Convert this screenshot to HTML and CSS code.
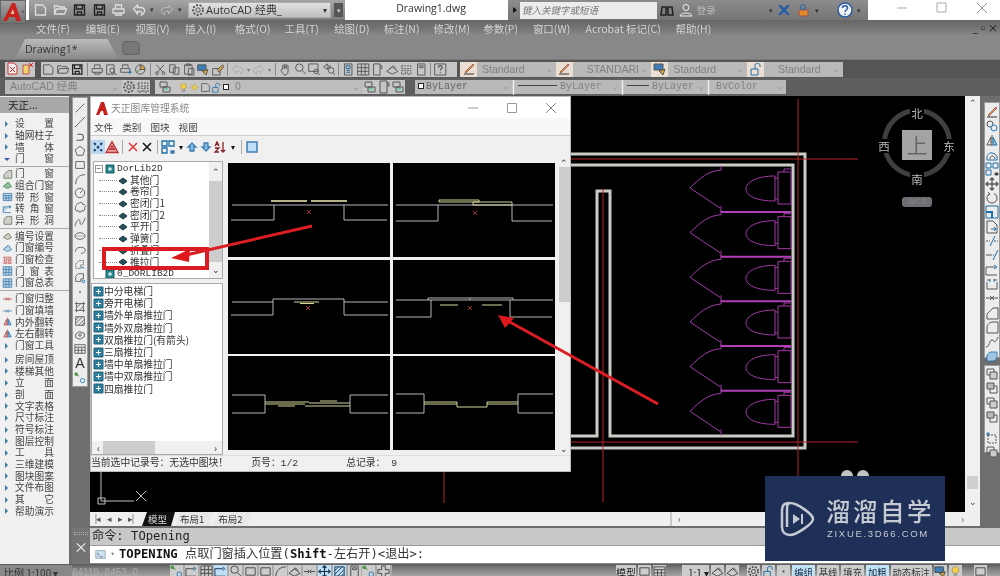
FILE: index.html
```html
<!DOCTYPE html>
<html lang="zh">
<head>
<meta charset="utf-8">
<title>AutoCAD</title>
<link rel="stylesheet" href="styles.css">
</head>
<body>
<svg class="sprite" width="0" height="0" aria-hidden="true">
<defs>
<symbol id="doc" viewBox="0 0 14 14"><path d="M2 2h7l3 3v7H2z"/></symbol>
<symbol id="open" viewBox="0 0 14 14"><path d="M1 11V3h4l1 1h5v2M1 11l2-5h10l-2 5z"/></symbol>
<symbol id="save" viewBox="0 0 14 14"><path d="M2 2h10v10H2zM4 2v4h6V2M5 9h4v3H5z" stroke-width="1.400"/></symbol>
<symbol id="print" viewBox="0 0 14 14"><path d="M4 5V2h6v3M1.500 6h11v4h-11zM4 10v2h6v-2"/></symbol>
<symbol id="prev" viewBox="0 0 14 14"><path d="M2 2h8v10H2z"/><circle cx="8" cy="8" r="2.500"/><path d="M10 10l3 3"/></symbol>
<symbol id="pub" viewBox="0 0 14 14"><path d="M3 5V2h6v3M1 6h10v4H1z"/><path d="M9 10h4M11 8v4" stroke="#1c6fa8"/></symbol>
<symbol id="pie" viewBox="0 0 14 14"><circle cx="7" cy="7" r="5"/><path d="M7 7V2a5 5 0 0 1 5 5z" fill="#d6a23a"/><path d="M7 7l-4 3" stroke="#3a8a3a"/></symbol>
<symbol id="cut" viewBox="0 0 14 14"><path d="M3 2l7 8M11 2l-7 8"/><circle cx="3.500" cy="11" r="1.500"/><circle cx="10.500" cy="11" r="1.500"/></symbol>
<symbol id="copy" viewBox="0 0 14 14"><path d="M2 2h6v8H2zM6 5h6v7H6z"/></symbol>
<symbol id="paste" viewBox="0 0 14 14"><path d="M2 2h8v10H2zM4 1h4v2H4zM6 6h6v7H6z"/></symbol>
<symbol id="match" viewBox="0 0 14 14"><path d="M1 2h9v6H1z" fill="#3f7fb5"/><path d="M6 9l6-2-2 6z" fill="#d9a33c"/></symbol>
<symbol id="brush" viewBox="0 0 14 14"><path d="M1 6h8v7H1z"/><path d="M6 7l6-5 1 2-5 6z" fill="#d9a33c"/></symbol>
<symbol id="undo" viewBox="0 0 14 14"><path d="M2 6l4-4v2.500h3c3 0 4 2 4 3.500s-1 3-3 4c1-2 0-3.500-2-3.500H6V11z"/></symbol>
<symbol id="redo" viewBox="0 0 14 14"><path d="M12 6L8 2v2.500H5C2 4.500 1 6.500 1 8s1 3 3 4c-1-2 0-3.500 2-3.500h2V11z"/></symbol>
<symbol id="pan" viewBox="0 0 14 14"><path d="M4 7V3l1-1 1 1v3-4l1-1 1 1v4-3l1-1 1 1v7l-2 3H6L2 8l1-1z"/></symbol>
<symbol id="zoom" viewBox="0 0 14 14"><circle cx="6" cy="5" r="4"/><path d="M9 8l4 4"/></symbol>
<symbol id="zwin" viewBox="0 0 14 14"><path d="M1 1h10v8H1z"/><circle cx="9" cy="9" r="2.500"/><path d="M11 11l2 2"/></symbol>
<symbol id="zprev" viewBox="0 0 14 14"><circle cx="9" cy="8" r="3"/><path d="M11 10l2 3M1 4l4-3v2h3v2H5v2z"/></symbol>
<symbol id="props" viewBox="0 0 14 14"><path d="M3 1h8v12H3z"/><path d="M5 3h4v3H5zM5 8h4M5 10h4" stroke="#1c5f90"/></symbol>
<symbol id="grid" viewBox="0 0 14 14"><path d="M1 1h12v12H1zM1 5h12M1 9h12M5 1v12M9 1v12"/></symbol>
<symbol id="tool" viewBox="0 0 14 14"><path d="M3 1h7v12H3zM10 3h2v3h-2"/></symbol>
<symbol id="sheet" viewBox="0 0 14 14"><path d="M1 9l6-5 6 5-6 3z"/><path d="M4 7l4-4 3 3"/></symbol>
<symbol id="markup" viewBox="0 0 14 14"><path d="M2 3h10v3H2zM2 8h4v4H2zM8 8h4v4H8z" stroke-dasharray="2 1"/></symbol>
<symbol id="calc" viewBox="0 0 14 14"><path d="M3 1h8v12H3zM5 3h4v2H5z"/></symbol>
<symbol id="help" viewBox="0 0 14 14"><path d="M1 1h12v12H1z"/><path d="M5 5c0-3 4-3 4 0 0 1.500-2 1.500-2 3M7 10v1" stroke-width="1.300"/></symbol>
<symbol id="red1" viewBox="0 0 14 14"><path d="M2 1h6l3 3v8H2z" fill="#eee" stroke="#c33"/><path d="M4 5l5 5M9 5l-5 5" stroke="#c22"/></symbol>
<symbol id="red2" viewBox="0 0 14 14"><path d="M2 3h6v9H2z" fill="#f3d26a" stroke="#b55"/><path d="M8 1l4 4M12 1L8 5" stroke="#d22"/></symbol>
<symbol id="gear" viewBox="0 0 14 14"><circle cx="7" cy="7" r="2.200"/><circle cx="7" cy="7" r="5" stroke-dasharray="2 1.500" stroke-width="1.800"/></symbol>
<symbol id="layer" viewBox="0 0 14 14"><path d="M2 2h7v5H2zM5 7h7v5H5z"/><path d="M6 9h4" stroke="#2c7"/></symbol>
<symbol id="bulb" viewBox="0 0 14 14"><circle cx="7" cy="5.500" r="3.800" fill="#f0d040" stroke="#a98"/><path d="M5.500 10h3v2h-3z" stroke="#888"/></symbol>
<symbol id="sun" viewBox="0 0 14 14"><circle cx="7" cy="7" r="3" fill="#eed040" stroke="#ba8"/><path d="M7 1v2M7 11v2M1 7h2M11 7h2M3 3l1 1M10 10l1 1M11 3l-1 1M4 10l-1 1" stroke="#ca6"/></symbol>
<symbol id="lock" viewBox="0 0 14 14"><path d="M2 7h7v6H2z" stroke="#1c6fa8"/><path d="M6 7V3c0-2 5-2 5 0v2" stroke="#1c6fa8"/></symbol>
<symbol id="line" viewBox="0 0 14 14"><path d="M2 12L12 2"/></symbol>
<symbol id="xline" viewBox="0 0 14 14"><path d="M1 13L13 1M3 11l1 1M10 4l1-1"/></symbol>
<symbol id="pline" viewBox="0 0 14 14"><path d="M3 12h5c4 0 4-7 0-7H4" stroke-width="1.200"/></symbol>
<symbol id="polygon" viewBox="0 0 14 14"><path d="M7 1.500l5.500 4-2 6.500h-7l-2-6.500z"/></symbol>
<symbol id="rect" viewBox="0 0 14 14"><path d="M2 3h10v8H2z"/></symbol>
<symbol id="arc" viewBox="0 0 14 14"><path d="M2 13C2 6 6 2 13 2"/></symbol>
<symbol id="circle" viewBox="0 0 14 14"><circle cx="7" cy="7" r="5.500"/><path d="M7 7l3-3"/></symbol>
<symbol id="cloud" viewBox="0 0 14 14"><path d="M3 5a2 2 0 0 1 3-2 2 2 0 0 1 4 1 2 2 0 0 1 2 4 2 2 0 0 1-3 3 2 2 0 0 1-4 0 2 2 0 0 1-3-3 2 2 0 0 1 1-3z"/></symbol>
<symbol id="spline" viewBox="0 0 14 14"><path d="M1 12C4 2 7 3 7 7s3 5 6-5"/></symbol>
<symbol id="ellipse" viewBox="0 0 14 14"><ellipse cx="7" cy="7" rx="6" ry="3.800"/><path d="M2 7h10" stroke-width=".5"/></symbol>
<symbol id="earc" viewBox="0 0 14 14"><path d="M2 9C0 4 11 2 13 6c1 3-2 5-5 5"/></symbol>
<symbol id="ins" viewBox="0 0 14 14"><path d="M2 7l4-4h5v5H8v4H2z" stroke-dasharray="2 1"/><path d="M8 10l4 2" stroke="#1c6fa8"/></symbol>
<symbol id="blk" viewBox="0 0 14 14"><path d="M2 5l3-3h6v6H8v3H2z"/><circle cx="11" cy="11" r="1.500" stroke="#1c6fa8"/></symbol>
<symbol id="dot" viewBox="0 0 14 14"><path d="M6 7h2" stroke-width="2"/></symbol>
<symbol id="hatch" viewBox="0 0 14 14"><path d="M3 3h8v8H3zM1 3h2M11 3h2M1 11h2M11 11h2M3 1v2M11 1v2M3 11v2M11 11v2M3 8l5-5M6 11l5-5"/></symbol>
<symbol id="grad" viewBox="0 0 14 14"><path d="M2 2h10v10H2zM2 6l4-4M2 10l8-8M5 12l7-7M9 12l3-3"/></symbol>
<symbol id="region" viewBox="0 0 14 14"><path d="M2 6l4-3 6 2v4l-5 3-5-2z"/><circle cx="7" cy="7" r="1.500"/></symbol>
<symbol id="tbl" viewBox="0 0 14 14"><path d="M1 2h12v10H1zM1 5h12M1 8.500h12M5 5v7M9 5v7"/></symbol>
<symbol id="addsel" viewBox="0 0 14 14"><path d="M2 2l4 3" stroke="#3a8a3a"/><circle cx="2.500" cy="2.500" r="1.500" fill="#5a5" stroke="#3a8a3a"/><circle cx="10" cy="10" r="2.500" stroke="#1c7fc0"/></symbol>
<symbol id="erase" viewBox="0 0 14 14"><path d="M2 12h10" stroke="#333"/><path d="M3 10L11 2l1 1-8 8z" fill="#d9a33c" stroke="#a66"/></symbol>
<symbol id="rcopy" viewBox="0 0 14 14"><circle cx="5" cy="5" r="3"/><circle cx="9" cy="9" r="3" stroke="#1c7fc0"/></symbol>
<symbol id="mirror" viewBox="0 0 14 14"><path d="M7 1v12" stroke-dasharray="2 1"/><path d="M6 3v8H2z"/><path d="M8 3v8h4z" fill="#9fc5e0" stroke="#1c6fa8"/></symbol>
<symbol id="offset" viewBox="0 0 14 14"><path d="M2 12c-1-4 2-8 5-7s6 2 5 7z" stroke="#1c6fa8"/><path d="M5 11c0-2 1-3 2-3s3 1 3 3" /></symbol>
<symbol id="array" viewBox="0 0 14 14"><path d="M1 1h5v5H1zM8 1h5v5H8zM1 8h5v5H1z" stroke="#1c6fa8"/><path d="M10 11h3v2h-3z" fill="#333"/></symbol>
<symbol id="move" viewBox="0 0 14 14"><path d="M7 1v12M1 7h12M5 3l2-2 2 2M5 11l2 2 2-2M3 5L1 7l2 2M11 5l2 2-2 2" stroke-width="1.300"/></symbol>
<symbol id="rot" viewBox="0 0 14 14"><path d="M9 2.500a5 5 0 1 1-4 0M3 1l2 2-2 1"/></symbol>
<symbol id="scale" viewBox="0 0 14 14"><path d="M1 1h12v12H1z" stroke="#1c6fa8"/><path d="M1 7h6v6" stroke="#1c6fa8" stroke-width="2"/></symbol>
<symbol id="stretch" viewBox="0 0 14 14"><path d="M2 13V1h6l4 4v8z"/><path d="M6 9h5M9 7l2 2-2 2" stroke="#1c6fa8"/></symbol>
<symbol id="trim" viewBox="0 0 14 14"><path d="M1 7h4M9 7h4" stroke-dasharray="2 1"/><path d="M5 12l5-10" stroke="#1c6fa8"/></symbol>
<symbol id="extend" viewBox="0 0 14 14"><path d="M1 7h5" /><path d="M6 7h3" stroke-dasharray="1 1"/><path d="M8 12l5-10" stroke="#1c6fa8"/></symbol>
<symbol id="brk1" viewBox="0 0 14 14"><path d="M1 12V4h9M1 12h11" /><path d="M9 2l3 2-3 2" stroke="#1c6fa8"/></symbol>
<symbol id="brk2" viewBox="0 0 14 14"><path d="M2 5v7h10V5M2 3h3M9 3h3" /><path d="M5 2v3M9 2v3" stroke="#1c6fa8"/></symbol>
<symbol id="join" viewBox="0 0 14 14"><path d="M1 7h5M8 7h5M5 5l2 2-2 2M9 5L7 7l2 2"/></symbol>
<symbol id="chamfer" viewBox="0 0 14 14"><path d="M2 13V8l6-6h5v11z"/></symbol>
<symbol id="fillet" viewBox="0 0 14 14"><path d="M2 13V8c0-4 3-6 6-6h5v11z"/></symbol>
<symbol id="blend" viewBox="0 0 14 14"><path d="M1 12c4 0 3-7 6-7s2 6 6-3"/></symbol>
<symbol id="expl" viewBox="0 0 14 14"><path d="M2 6l3-3h7v6l-3 3H2z" fill="#9fc5e0" stroke="#1c6fa8" stroke-dasharray="2 .5"/></symbol>
<symbol id="front" viewBox="0 0 14 14"><path d="M2 2h7v6H2z"/><path d="M5 5h7v7H5z" fill="#ccc"/></symbol>
<symbol id="back" viewBox="0 0 14 14"><path d="M5 5h7v7H5z"/><path d="M2 2h7v6H2z" fill="#bbb"/></symbol>
<symbol id="tbadd" viewBox="0 0 14 14"><path d="M3 4h8v8H3z" stroke-dasharray="2 1"/><path d="M1 3h4M3 1v4" stroke="#1c6fa8"/></symbol>
<symbol id="plus" viewBox="0 0 14 14"><path d="M5 1h4v4h4v4H9v4H5V9H1V5h4z"/></symbol>
<symbol id="slider" viewBox="0 0 10 10"><path d="M1 1h8v8H1z" fill="#2a8a8a" stroke="#156"/><path d="M3 5h4M5 3v4" stroke="#fff"/></symbol>
<symbol id="blockic" viewBox="0 0 10 10"><path d="M1 5l4-3 4 3-4 3z" fill="#26505a" stroke="#16383f"/></symbol>
<symbol id="listic" viewBox="0 0 11 11"><path d="M1 1h9v9H1z" fill="#2f7f9c" stroke="#20607a"/><path d="M3 5.500h5M5.500 3v5" stroke="#fff"/></symbol>
</defs>
</svg>

<div class="app">
  <header class="titlebar">
    <div class="appbtn"><svg width="26" height="22" viewBox="0 0 26 22"><path d="M3 20L12 2h3l6 18h-5l-1-4H9l-2 4z" fill="#c8201c"/><path d="M10.500 13h4l-1.500-5z" fill="#e7b9a8"/><path d="M22 10l2 0-1 2z" fill="#333"/></svg></div>
    <div class="quick">
      <svg class="ic lite"><use href="#doc"/></svg><svg class="ic lite"><use href="#open"/></svg><svg class="ic dk"><use href="#save"/></svg><svg class="ic dk"><use href="#save"/></svg><svg class="ic lite"><use href="#print"/></svg><svg class="ic lite"><use href="#undo"/></svg><span class="drop">▾</span><svg class="ic fade"><use href="#redo"/></svg><span class="drop">▾</span>
      <div class="wscombo"><svg class="ic"><use href="#gear"/></svg><span>AutoCAD 经典_</span><span class="caret">▾</span></div>
      <span class="more">▾</span>
    </div>
    <div class="doctitle">Drawing1.dwg</div>
    <div class="search">
      <span class="tri"></span>
      <div class="searchbox">键入关键字或短语</div>
      <svg class="ic big" viewBox="0 0 14 14"><path d="M2 4h4v8H1zM8 4h4l1 8H8zM6 6h2" stroke="#222" stroke-width="1.500"/></svg>
      <svg class="ic big" viewBox="0 0 14 14"><circle cx="7" cy="4.500" r="3" stroke="#eee"/><path d="M1 13c1-4 11-4 12 0z" stroke="#eee"/></svg>
      <span class="login">登录</span>
      <span class="drop wide">▾</span>
      <svg class="ic big" viewBox="0 0 14 14"><path d="M1 2l4 5-4 5h3l3-3 3 3h3L9 7l4-5h-3L7 5 4 2z" fill="#2b5fa5" stroke="none"/></svg>
      <svg class="ic big" viewBox="0 0 14 14"><path d="M3 7h9v6H3z" fill="#e48a2a" stroke="#955"/><circle cx="7" cy="4" r="2.500" stroke="#26a"/></svg>
      <span class="drop">▾</span>
      <svg class="ic help" viewBox="0 0 16 16"><circle cx="8" cy="8" r="7" fill="#f3f3f3" stroke="#2a5ea8" stroke-width="1.500"/><path d="M5.500 6c0-3 5-3 5 0 0 2-2.500 2-2.500 4M8 11.500v1.500" stroke="#2a5ea8" stroke-width="1.500"/></svg>
      <span class="drop">▾</span>
    </div>
    <div class="winctl">
      <svg width="14" height="14" viewBox="0 0 14 14"><path d="M2 7h10" stroke="#aaa"/></svg>
      <svg width="14" height="14" viewBox="0 0 14 14"><path d="M2 2h9v9H2z" fill="none" stroke="#aaa"/></svg>
      <svg width="14" height="14" viewBox="0 0 14 14"><path d="M2 2l10 10M12 2L2 12" stroke="#999"/></svg>
    </div>
  </header>

  <nav class="menubar">
    <span class="m2">文件(F)</span><span class="m2">编辑(E)</span><span class="m2">视图(V)</span><span class="m2">插入(I)</span><span class="m2">格式(O)</span><span class="m2">工具(T)</span><span class="m2">绘图(D)</span><span class="m2">标注(N)</span><span class="m2">修改(M)</span><span class="m2">参数(P)</span><span class="m2">窗口(W)</span><span class="m3">Acrobat 标记(C)</span><span class="m4">帮助(H)</span>
    <span class="mdi"><b>_</b><b>▫</b><b>×</b></span>
  </nav>

  <div class="tabbar">
    <div class="doctab"><span>Drawing1*</span><i>×</i></div>
    <div class="newtab"></div>
  </div>

  <div class="tbrow r1">
    <div class="panel p-a"><svg class="ic"><use href="#red1"/></svg><svg class="ic"><use href="#red2"/></svg></div>
    <div class="panel p-b">
      <svg class="ic"><use href="#doc"/></svg><svg class="ic"><use href="#open"/></svg><svg class="ic dk"><use href="#save"/></svg><i class="sep"></i>
      <svg class="ic"><use href="#print"/></svg><svg class="ic"><use href="#prev"/></svg><svg class="ic"><use href="#pub"/></svg><svg class="ic"><use href="#pie"/></svg><i class="sep"></i>
      <svg class="ic"><use href="#cut"/></svg><svg class="ic"><use href="#copy"/></svg><svg class="ic"><use href="#paste"/></svg><svg class="ic"><use href="#match"/></svg><svg class="ic"><use href="#brush"/></svg><i class="sep"></i>
      <svg class="ic fade"><use href="#undo"/></svg><span class="tiny">▾</span><svg class="ic fade"><use href="#redo"/></svg><span class="tiny">▾</span><i class="sep"></i>
      <svg class="ic"><use href="#pan"/></svg><svg class="ic"><use href="#zoom"/></svg><svg class="ic"><use href="#zwin"/></svg><svg class="ic"><use href="#zprev"/></svg><i class="sep"></i>
      <svg class="ic"><use href="#props"/></svg><svg class="ic"><use href="#grid"/></svg><svg class="ic"><use href="#tool"/></svg><svg class="ic"><use href="#sheet"/></svg><svg class="ic"><use href="#markup"/></svg><svg class="ic"><use href="#calc"/></svg><i class="sep"></i>
      <svg class="ic"><use href="#help"/></svg>
    </div>
    <div class="panel p-c">
      <div class="icbox"><svg class="ic"><use href="#erase"/></svg></div><div class="combo w78 sans">Standard<span class="chev">⌄</span></div>
      <div class="icbox"><svg class="ic"><use href="#erase"/></svg></div><div class="combo w78 sans ctr">STANDARI<span class="chev">⌄</span></div>
      <div class="icbox"><svg class="ic"><use href="#match"/></svg></div><div class="combo w78 sans">Standard<span class="chev">⌄</span></div>
      <div class="icbox"><svg class="ic"><use href="#lock"/></svg></div><div class="combo w78 sans ctr">Standard<span class="chev">⌄</span></div>
    </div>
  </div>

  <div class="tbrow r2">
    <div class="panel q-a"><div class="combo flex1 sans">AutoCAD 经典<span class="chev">⌄</span></div><svg class="ic"><use href="#gear"/></svg><svg class="ic"><use href="#markup"/></svg></div>
    <div class="panel q-b"><svg class="ic"><use href="#layer"/></svg><i class="gapx"></i><svg class="ic sm"><use href="#bulb"/></svg><svg class="ic sm"><use href="#sun"/></svg><svg class="ic sm"><use href="#doc"/></svg><svg class="ic sm"><use href="#lock"/></svg><span class="sw"></span><div class="combo flex1 sans layer0">0<span class="chev">⌄</span></div><svg class="ic"><use href="#layer"/></svg><svg class="ic"><use href="#tool"/></svg><svg class="ic"><use href="#layer"/></svg></div>
    <div class="panel q-c">
      <div class="combo by1 mono"><span class="sw2"></span>ByLayer<span class="chev">⌄</span></div><i class="sep tall"></i>
      <div class="combo by2 mono"><span class="ln l58"></span>ByLayer<span class="chev">⌄</span></div><i class="sep tall"></i>
      <div class="combo by3 mono"><span class="ln l22"></span>ByLayer<span class="chev">⌄</span></div><i class="sep tall"></i>
      <div class="combo by4 mono">BvColor<span class="chev">⌄</span></div>
    </div>
  </div>

  <div class="body">
    <aside class="palette">
      <div class="phead">天正...</div>
      <ul class="plist">
        <li><em class="tr"></em><span>设置</span></li>
        <li><em class="tr"></em><span>轴网柱子</span></li>
        <li><em class="tr"></em><span>墙体</span></li>
        <li><em class="tr down"></em><span>门窗</span></li>
        <li class="psep s2"></li>
        <li><svg class="pic"><use href="#chamfer"/></svg><span>门窗</span></li>
        <li><svg class="pic g"><use href="#sheet"/></svg><span>组合门窗</span></li>
        <li><svg class="pic b"><use href="#tbl"/></svg><span>带形窗</span></li>
        <li><svg class="pic b"><use href="#brk1"/></svg><span>转角窗</span></li>
        <li><svg class="pic"><use href="#fillet"/></svg><span>异形洞</span></li>
        <li class="psep s3"></li>
        <li><svg class="pic"><use href="#sheet"/></svg><span>编号设置</span></li>
        <li><svg class="pic b"><use href="#sheet"/></svg><span>门窗编号</span></li>
        <li><svg class="pic r"><use href="#markup"/></svg><span>门窗检查</span></li>
        <li><svg class="pic b"><use href="#grid"/></svg><span>门窗表</span></li>
        <li><svg class="pic b"><use href="#grid"/></svg><span>门窗总表</span></li>
        <li class="psep s3"></li>
        <li><svg class="pic r"><use href="#join"/></svg><span>门窗归整</span></li>
        <li><svg class="pic b"><use href="#join"/></svg><span>门窗填墙</span></li>
        <li><svg class="pic r"><use href="#mirror"/></svg><span>内外翻转</span></li>
        <li><svg class="pic r"><use href="#mirror"/></svg><span>左右翻转</span></li>
        <li><em class="tr"></em><span>门窗工具</span></li>
        <li class="pgap"></li>
        <li><em class="tr"></em><span>房间屋顶</span></li>
        <li><em class="tr"></em><span>楼梯其他</span></li>
        <li><em class="tr"></em><span>立面</span></li>
        <li><em class="tr"></em><span>剖面</span></li>
        <li><em class="tr"></em><span>文字表格</span></li>
        <li><em class="tr"></em><span>尺寸标注</span></li>
        <li><em class="tr"></em><span>符号标注</span></li>
        <li><em class="tr"></em><span>图层控制</span></li>
        <li><em class="tr"></em><span>工具</span></li>
        <li><em class="tr"></em><span>三维建模</span></li>
        <li><em class="tr"></em><span>图块图案</span></li>
        <li><em class="tr"></em><span>文件布图</span></li>
        <li><em class="tr"></em><span>其它</span></li>
        <li><em class="tr"></em><span>帮助演示</span></li>
      </ul>
    </aside>
    <div class="main">
      <div class="work">
        <div class="leftstrip">
          <svg class="ti"><use href="#line"/></svg><svg class="ti"><use href="#xline"/></svg><svg class="ti"><use href="#pline"/></svg><svg class="ti"><use href="#polygon"/></svg><svg class="ti"><use href="#rect"/></svg><svg class="ti"><use href="#arc"/></svg><svg class="ti"><use href="#circle"/></svg><svg class="ti"><use href="#cloud"/></svg><svg class="ti"><use href="#spline"/></svg><svg class="ti"><use href="#ellipse"/></svg><svg class="ti"><use href="#earc"/></svg><svg class="ti"><use href="#ins"/></svg><svg class="ti"><use href="#blk"/></svg><svg class="ti"><use href="#dot"/></svg><svg class="ti"><use href="#hatch"/></svg><svg class="ti"><use href="#grad"/></svg><svg class="ti"><use href="#region"/></svg><svg class="ti"><use href="#tbl"/></svg><span class="ti txt">A</span><svg class="ti"><use href="#addsel"/></svg>
        </div>
        <div class="center">
          <div class="vp-row">
            <div class="viewport">
              <svg class="cad" viewBox="90 96 875 416" width="875" height="416">
                <defs>
                  <g id="stall">
                    <path d="M721 166V170C708 171 700 178 690 188L720 208M721 206V212"/>
                    <path d="M775 176C757 176 746 182 746 189S757 201 775 201ZM775 178H778M775 199H778M778 172H791V204H778ZM784 172V169H791"/>
                  </g>
                </defs>
                <g class="walls">
                  <path d="M571 154H805V448H571"/>
                  <path d="M571 165H793V436H610V191H597V436H571"/>
                </g>
                <g class="axis">
                  <path d="M571 159H858M571 442H858M798 99V512M603 189V502M444 470V503"/>
                </g>
                <g class="stalls">
                  <use href="#stall"/>
                  <use href="#stall" y="44.670"/>
                  <use href="#stall" y="89.330"/>
                  <use href="#stall" y="134"/>
                  <use href="#stall" y="178.670"/>
                  <use href="#stall" y="223.330"/>
                  <path class="part" d="M721 212H791M721 256.700H791M721 301.300H791M721 346H791M721 390.700H791"/>
                </g>
                <g class="ucs"><path d="M101 470V501H134M98 498h7v6h-7zM136 491l10 10M146 491l-10 10"/></g>
                <circle class="avatar" cx="847" cy="476" r="6"/><circle class="avatar" cx="863" cy="476" r="6"/>
              </svg>
              <div class="viewcube">
                <span class="vc-ring"></span>
                <span class="vc-top">上</span>
                <span class="vc-n">北</span><span class="vc-s">南</span><span class="vc-w">西</span><span class="vc-e">东</span>
                <span class="vc-wcs">WCS</span>
              </div>
            </div>
            <div class="vscroll"><span>⌃</span><i></i><span>⌄</span></div>
          </div>
          <div class="layouttabs">
            <span class="navs"><b>|◂</b><b>◂</b><b>▸</b><b>▸|</b></span>
            <span class="ltab active">模型</span><span class="ltab">布局1</span><span class="ltab">布局2</span>
            <span class="hsc"><b>‹</b><b>›</b></span>
          </div>
        </div>
        <div class="rightside">
          <div class="rstrip">
            <svg class="ti"><use href="#erase"/></svg><svg class="ti"><use href="#rcopy"/></svg><svg class="ti"><use href="#mirror"/></svg><svg class="ti"><use href="#offset"/></svg><svg class="ti"><use href="#array"/></svg><svg class="ti"><use href="#move"/></svg><svg class="ti"><use href="#rot"/></svg><svg class="ti"><use href="#scale"/></svg><svg class="ti"><use href="#stretch"/></svg><svg class="ti"><use href="#trim"/></svg><svg class="ti"><use href="#extend"/></svg><svg class="ti"><use href="#brk1"/></svg><svg class="ti"><use href="#brk2"/></svg><svg class="ti"><use href="#join"/></svg><svg class="ti"><use href="#chamfer"/></svg><svg class="ti"><use href="#fillet"/></svg><svg class="ti"><use href="#blend"/></svg><svg class="ti"><use href="#expl"/></svg>
          </div>
          <div class="rstrip two">
            <svg class="ti"><use href="#front"/></svg><svg class="ti"><use href="#back"/></svg><svg class="ti"><use href="#front"/></svg><svg class="ti"><use href="#back"/></svg><i class="rsep"></i><svg class="ti"><use href="#tbadd"/></svg><svg class="ti"><use href="#front"/></svg>
          </div>
        </div>
      </div>
      <div class="command">
        <div class="cmdhandle"><span class="dots"></span><span class="cx">×</span></div>
        <div class="cmdtext">
          <div class="cmdhist">命令: TOpening</div>
          <div class="cmdline"><svg class="ic sm" viewBox="0 0 14 14"><path d="M1 2h12v10H1z" fill="#cfe0ee" stroke="#8aa"/><path d="M3 5l2 2-2 2M6 10h4" stroke="#456"/></svg><span class="tiny">▾</span><span class="cmdmsg"><b>TOPENING</b> 点取门窗插入位置(<b>Shift</b>-左右开)&lt;退出&gt;:</span></div>
        </div>
      </div>
    </div>
  </div>

  <footer class="status">
    <span class="scale">比例 1:100 ▾</span>
    <span class="coords">84119, 8453, 0</span>
    <span class="stoggles">
      <svg class="si"><use href="#addsel"/></svg><svg class="si"><use href="#brk1"/></svg><svg class="si"><use href="#grid"/></svg><svg class="si on"><use href="#brk1"/></svg><svg class="si"><use href="#zoom"/></svg><svg class="si"><use href="#rect"/></svg><svg class="si"><use href="#rect"/></svg><svg class="si"><use href="#arc"/></svg><svg class="si"><use href="#sheet"/></svg><svg class="si"><use href="#join"/></svg><svg class="si on"><use href="#move"/></svg><svg class="si on"><use href="#grad"/></svg><svg class="si"><use href="#calc"/></svg><svg class="si"><use href="#addsel"/></svg><svg class="si"><use href="#plus"/></svg>
    </span>
    <span class="sright">
      <span class="st1">模型</span><svg class="si"><use href="#rect"/></svg><svg class="si"><use href="#tbl"/></svg>
      <span class="st2">1:1 ▾</span><svg class="si"><use href="#sheet"/></svg><svg class="si"><use href="#sheet"/></svg><i class="gap4"></i><svg class="si"><use href="#gear"/></svg><svg class="si"><use href="#lock"/></svg><svg class="si"><use href="#dot"/></svg>
      <span class="chip on">编组</span><span class="chip">基线</span><span class="chip">填充</span><span class="chip on">加粗</span><span class="chip">动态标注</span><svg class="si"><use href="#match"/></svg><svg class="si"><use href="#bulb"/></svg><i class="gap8"></i><svg class="si"><use href="#rect"/></svg>
    </span>
  </footer>

  <section class="dialog">
    <div class="dtitle"><svg width="14" height="14" viewBox="0 0 14 14"><path d="M1 14L6 1h3l4 13H9L8 10H6l-2 4z" fill="#c8201c"/></svg><span>天正图库管理系统</span>
      <div class="dctl"><svg width="12" height="12" viewBox="0 0 12 12"><path d="M1 6h10" stroke="#999"/></svg><svg width="12" height="12" viewBox="0 0 12 12"><path d="M1.500 1.500h9v9h-9z" fill="none" stroke="#999"/></svg><svg width="12" height="12" viewBox="0 0 12 12"><path d="M1 1l10 10M11 1L1 11" stroke="#888"/></svg></div>
    </div>
    <div class="dmenu"><span>文件</span><span>类别</span><span>图块</span><span>视图</span></div>
    <div class="dtools">
      <svg class="di snap" viewBox="0 0 14 14"><path d="M0 0h14v14H0z" fill="#bcd8ee" stroke="none"/><path d="M3 3l8 8M11 3l-8 8" stroke="#1b3f7a" stroke-width="2" stroke-dasharray="2.500 2"/></svg><svg class="di" viewBox="0 0 14 14"><path d="M7 1.500L13 12.500H1z" fill="#e9a0a0" stroke="#b33"/><path d="M4 9h6M5.500 6.500h3" stroke="#a22"/></svg><i class="dsep"></i>
      <svg class="di rx" viewBox="0 0 14 14"><path d="M3 3l8 8M11 3l-8 8"/></svg><svg class="di bx" viewBox="0 0 14 14"><path d="M3 3l8 8M11 3l-8 8"/></svg><i class="dsep"></i>
      <svg class="di bl"><use href="#array"/></svg><span class="dd">▾</span><svg class="di bf" viewBox="0 0 14 14"><path d="M7 3l4 4H9v4H5V7H3z"/></svg><svg class="di bf" viewBox="0 0 14 14"><path d="M7 11l4-4H9V3H5v4H3z"/></svg><svg class="di" viewBox="0 0 14 14"><path d="M2 6l2-4 2 4M3 4.500h2M2 8h4l-4 4h4M10 2v10M8 10l2 2 2-2" stroke="#822"/></svg><span class="dd">▾</span><i class="dsep last"></i>
      <svg class="di bl" viewBox="0 0 14 14"><path d="M2 2h10v10H2z" fill="#bfe0f4" stroke-width="1.500"/></svg>
    </div>
    <div class="dbody">
      <div class="dleft">
        <div class="tree">
          <div class="troot"><span class="box">−</span><svg class="ni"><use href="#slider"/></svg>DorLib2D</div>
          <div class="tk"><svg class="ni"><use href="#blockic"/></svg>其他门</div>
          <div class="tk"><svg class="ni"><use href="#blockic"/></svg>卷帘门</div>
          <div class="tk"><svg class="ni"><use href="#blockic"/></svg>密闭门1</div>
          <div class="tk"><svg class="ni"><use href="#blockic"/></svg>密闭门2</div>
          <div class="tk"><svg class="ni"><use href="#blockic"/></svg>平开门</div>
          <div class="tk"><svg class="ni"><use href="#blockic"/></svg>弹簧门</div>
          <div class="tk"><svg class="ni"><use href="#blockic"/></svg>折叠门</div>
          <div class="tk"><svg class="ni"><use href="#blockic"/></svg>推拉门</div>
          <div class="troot"><span class="box nob"></span><svg class="ni"><use href="#slider"/></svg>0_DORLIB2D</div>
          <div class="tscroll"><span>⌃</span><i></i><span>⌄</span></div>
        </div>
        <div class="list">
          <div class="li"><svg class="ni"><use href="#listic"/></svg>中分电梯门</div>
          <div class="li"><svg class="ni"><use href="#listic"/></svg>旁开电梯门</div>
          <div class="li"><svg class="ni"><use href="#listic"/></svg>墙外单扇推拉门</div>
          <div class="li"><svg class="ni"><use href="#listic"/></svg>墙外双扇推拉门</div>
          <div class="li"><svg class="ni"><use href="#listic"/></svg>双扇推拉门(有箭头)</div>
          <div class="li"><svg class="ni"><use href="#listic"/></svg>三扇推拉门</div>
          <div class="li"><svg class="ni"><use href="#listic"/></svg>墙中单扇推拉门</div>
          <div class="li"><svg class="ni"><use href="#listic"/></svg>墙中双扇推拉门</div>
          <div class="li"><svg class="ni"><use href="#listic"/></svg>四扇推拉门</div>
          <div class="lscroll"><span>‹</span><i></i><span>›</span></div>
        </div>
      </div>
      <div class="previews">
        <svg class="cell" viewBox="0 0 162 94"><path class="w" d="M4 42H160M3 57H46V42M116 42V57H159"/><path class="y2" d="M43 38H79M83 38H119"/><path class="x" d="M79 47l4 4M83 47l-4 4"/></svg>
        <svg class="cell" viewBox="0 0 162 94"><path class="w" d="M3 42H160M3 58H45V42M119 42V58H159"/><path class="y" d="M46 37H86V39H46zM80 39H119V42H80z"/><path class="x" d="M80 48l4 4M84 48l-4 4"/></svg>
        <svg class="cell" viewBox="0 0 162 94"><path class="w" d="M4 42H45M116 42H160M3 55H45V39H116V55H160"/><path class="y" d="M66 42H91M72 43.500H86"/><path class="x" d="M78 46l4 4M82 46l-4 4"/></svg>
        <svg class="cell" viewBox="0 0 162 94"><path class="w" d="M3 40H160M3 57H38V40M117 40V57H159M35 40V38H120V40M77 38V40"/><path class="y" d="M47 45H65M89 45H109"/><path class="x" d="M75 46l4 4M79 46l-4 4"/></svg>
        <svg class="cell" viewBox="0 0 162 94"><path class="w" d="M4 39H37V57H4M160 39H122V57H160"/><path class="y" d="M37 46H81M37 48H77M77 50H122M81 47H122M50 50H67M92 45H109"/></svg>
        <svg class="cell" viewBox="0 0 162 94"><path class="w" d="M3 38H31V57H3M160 38H125V57H160"/><path class="y" d="M31 46H64L64 51H94L94 46H125M31 48H64M94 48H125"/></svg>
        <div class="pscroll"><span>⌃</span><i></i><span>⌄</span></div>
      </div>
    </div>
    <div class="dstatus"><span>当前选中记录号：无选中图块！</span><span class="pg">页号：1/2</span><span class="tot">总记录： 9</span></div>
  </section>

  <svg class="marks" viewBox="0 0 1000 576" width="1000" height="576">
    <rect x="104" y="249" width="103" height="19"/>
    <path d="M312 226L186 255M658 404L508 321"/>
    <path class="head" d="M171 258L190 249L189 262zM498 315L514 318L505 328z"/>
  </svg>

  <aside class="brand">
    <svg class="brandlogo" width="36" height="36" viewBox="0 0 36 36"><path d="M10 2C6 2 3 4 3 9V26C3 31 6 34 11 34M8 8V26M11 34C17 34 34 23 34 18S18 2 11 2C9 2 8 5 8 8" fill="none" stroke="#c5cad2" stroke-width="2.500"/><path d="M14 13l7 5-7 5z" fill="#c5cad2"/><path d="M23 13v10" stroke="#c5cad2" stroke-width="2"/></svg>
    <div class="brandtext"><strong>溜溜自学</strong><small>ZIXUE.3D66.COM</small></div>
  </aside>
</div>
</body>
</html>
```
FILE: styles.css
```css
*{box-sizing:border-box;margin:0;padding:0}
html,body{width:1000px;height:576px;overflow:hidden;background:#fff}
body{font-family:"Noto Sans CJK SC","Liberation Sans",sans-serif;font-size:10px;color:#333}
.sprite{position:absolute}
ul{list-style:none}
em,i{font-style:normal}
.app{position:relative;width:1000px;height:576px;display:flex;flex-direction:column;overflow:hidden;filter:blur(.35px)}

/* icons */
.ic{width:14px;height:14px;flex:none;fill:none;stroke:#555;stroke-width:1}
.ic.lite{stroke:#ddd}
.ic.dk{stroke:#222}
.ic.fade{stroke:#aaa}
.ic.sm{width:11px;height:11px}
.ti{display:block;width:14px;height:14px;fill:none;stroke:#555;stroke-width:1;flex:none}
.si{width:13px;height:13px;flex:none;fill:none;stroke:#444;stroke-width:1;background:#ccc}
.si.on{background:#bfe0f4;stroke:#135}

/* title */
.titlebar{height:20px;display:flex;background:#fff;flex:none}
.appbtn{width:26px;height:24px;background:linear-gradient(#a3a3a3,#707070);border:1px solid #666;flex:none;position:relative;z-index:2}
.appbtn svg{display:block;margin:0 0 0 -1px}
.quick{margin-left:3px;width:316px;height:20px;background:linear-gradient(#a4a4a4,#808080);display:flex;align-items:center;padding:0 2px 0 4px;border-bottom:1px solid #777}
.quick .ic.lite,.quick .ic.dk{width:15px;height:14px;margin-right:4.500px;stroke-width:1.300}
.quick .ic.fade{width:15px;margin-right:3px;stroke:#bbb}
.drop{font-size:7px;color:#333;width:12px;line-height:1}
.wscombo{margin-left:auto;width:143px;height:16px;background:linear-gradient(#e2e2e2,#bfbfbf);border:1px solid #aaa;display:flex;align-items:center;padding-left:2px;font-family:"Open Sans","Noto Sans CJK SC",sans-serif;font-size:11px;color:#333;line-height:14px;flex:none}
.wscombo .ic{margin-right:1px}
.wscombo .caret{margin-left:auto;margin-right:3px;font-size:8px}
.more{margin-left:3px;width:9px;height:14px;background:#555;color:#ccc;font-size:7px;text-align:center;line-height:14px;flex:none}
.doctitle{width:163px;text-align:center;font-family:"Open Sans",sans-serif;font-size:10.500px;line-height:16px;color:#333;padding-left:9px}
.search{width:360px;height:20px;background:linear-gradient(#8c8c8c,#757575);display:flex;align-items:center;padding-left:5px}
.tri{width:0;height:0;border-left:4px solid #111;border-top:3.500px solid transparent;border-bottom:3.500px solid transparent;margin-right:3px}
.searchbox{width:144px;height:17px;background:#ececec;color:#777;font-style:italic;line-height:17px;padding-left:2px;font-size:9.500px;margin-right:3px}
.ic.big{width:14px;height:14px;margin-right:5px}
.login{color:#bbb;font-size:9.500px;width:24px;margin-left:-1px}
.drop.wide{margin-left:50px;width:8px}
.ic.help{width:16px;height:16px;margin:0 4px 0 14px}
.search .ic.big + .drop{width:8px}
.winctl{flex:1;display:flex;justify-content:space-between;padding:1px 11px 0 27px}

/* menu */
.menubar{height:16px;flex:none;background:linear-gradient(#666,#777 60%,#8a8a8a);display:flex;align-items:center;color:#d4d4d4;font-size:10.500px;padding-left:36px;white-space:nowrap;line-height:15px;position:relative}
.menubar span{display:block}
.m2{width:49.700px;flex:none}
.m3{width:90px;flex:none;margin-left:3px}
.m4{flex:none}
.mdi{position:absolute;right:2px;top:0;display:flex;gap:3px}
.mdi b{font-weight:400;color:#111;width:7px;font-size:10px}

/* doc tabs */
.tabbar{height:24px;flex:none;background:#888;display:flex;align-items:flex-end;padding-left:15px;border-bottom:1px solid #7a7a7a}
.doctab{width:103px;height:20px;background:linear-gradient(#bbb,#8a8a8a);clip-path:polygon(0 100%,10px 0,90% 0,100% 100%);display:flex;align-items:center;justify-content:space-between;padding:0 14px 0 10px;font-family:"Open Sans",sans-serif;font-size:10.500px;color:#333}
.doctab i{color:#aaa;font-size:10px}
.newtab{width:18px;height:14px;margin:0 0 4px 4px;background:#777;border:1px solid #666;border-radius:3px 5px 3px 3px}

/* toolbars */
.tbrow{height:18px;flex:none;background:#555;display:flex;align-items:center;padding-left:5px;white-space:nowrap}
.panel{height:15px;background:#c6c6c6;display:flex;align-items:center;flex:none}
.p-a{width:30px;justify-content:space-around;margin-right:6px}
.p-b{width:416px;margin-right:3px}
.p-b .ic{width:14.500px;height:13px}
.sep{display:block;width:1px;height:13px;background:#888;margin:0 2px;flex:none}
.sep.tall{height:15px;background:#eee;margin:0 1px}
.tiny{font-size:6px;color:#777;width:7px;text-align:center;flex:none}
.p-c{width:383px}
.icbox{width:17px;height:15px;background:#eadfd2;display:flex;align-items:center;justify-content:center;flex:none}
.combo{height:15px;background:#b9b9b9;color:#808080;font-size:10.500px;line-height:14px;padding-left:5px;position:relative;flex:none;overflow:hidden}
.combo.ctr{padding-left:14px}
.w78{width:78.700px}
.sans{font-family:"Liberation Sans","Noto Sans CJK SC",sans-serif}
.mono{font-family:"Liberation Mono","Noto Sans CJK SC",monospace;font-size:10px}
.chev{position:absolute;right:3px;top:0;color:#999;font-size:10px}
.tbrow.r2{background:#5f5f5f}
.r2 .panel{height:14px}
.r2 .combo{height:14px;line-height:13px}
.q-a{width:145px;margin-right:5px}
.flex1{flex:1;min-width:0}
.q-b{width:250px;padding-left:3px;margin-right:10px}
.gapx{width:6px;flex:none}
.sw{width:6px;height:6px;background:#fff;border:1px solid #222;margin:0 0 0 1px;flex:none}
.layer0{background:#bdbdbd;padding-left:6px}
.q-c{width:370px}
.sw2{display:inline-block;width:6px;height:6px;background:#fff;border:1px solid #222;margin-right:2px}
.by1{width:97px;padding-left:3px;color:#666}
.by2{width:106px;padding-left:3px}
.by3{width:83px;padding-left:3px}
.by4{width:76px;padding-left:6px}
.ln{display:inline-block;height:1px;background:#444;vertical-align:3px;margin-right:3px}
.l58{width:39px}
.l22{width:22px}

/* body */
.body{height:468px;flex:none;display:flex;background:#6e6e6e}
.palette{width:69px;flex:none;background:#f0f0f0;margin-right:3px}
.phead{height:16px;background:#a9a9a9;color:#222;font-size:10.500px;line-height:16px;padding-left:8px;margin:1px 0 5px}
.plist li{height:11.660px;display:flex;align-items:center;padding-left:2px;color:#444;line-height:11px;position:relative}
.plist li span{position:absolute;left:15px;width:39px;text-align-last:justify;font-size:9.700px}
.plist li.psep{height:1px;background:#aaa;margin:1px 0 1.300px}
.plist li.psep.s3{margin:1.500px 0 1.800px}
.plist li.pgap{height:2.300px}
.tr{position:absolute;left:5px;top:3px;width:0;height:0;border-left:3.500px solid #3a7ca8;border-top:3px solid transparent;border-bottom:3px solid transparent}
.tr.down{border-left:3px solid transparent;border-right:3px solid transparent;border-top:3.500px solid #3a5ca8;border-bottom:0;top:5px;left:4px}
.pic{width:11px;height:10px;fill:#cfcfcf;stroke:#6d7f55;stroke-width:1.200}
.pic.b{stroke:#4a84ad;fill:#b8d4e8}
.pic.g{stroke:#4e8a5c;fill:#8fc0a0}
.pic.r{stroke:#bb4444;fill:#e8c0c0}

.main{width:928px;flex:none;display:flex;flex-direction:column}
.work{height:432px;flex:none;display:flex}
.leftstrip{width:16px;height:290px;margin:1px 2px 0 0;background:#ececec;border:1px solid #999;padding-top:3px;display:flex;flex-direction:column;gap:.2px;flex:none;align-items:center}
.leftstrip .ti{width:12px;height:14px}
.ti.txt{font:14px/14px "Liberation Sans",sans-serif;color:#333;text-align:center}
.center{width:890px;flex:none;display:flex;flex-direction:column}
.vp-row{height:416px;display:flex;flex:none}
.viewport{width:875px;height:416px;background:#000;position:relative;overflow:hidden;flex:none}
.cad{position:absolute;left:0;top:0;fill:none}
.walls path{stroke:#cbcbc6;stroke-width:3;fill:none}
.axis path{stroke:#b0262a;stroke-width:1;fill:none}
.stalls{stroke:#a33aa8;stroke-width:1;fill:none}
.stalls .part{stroke:#b040b8;stroke-width:2}
.ucs path{stroke:#c0c0c0;stroke-width:1;fill:none}
.avatar{fill:#c2c2c2}
.viewcube{position:absolute;left:777px;top:0;width:100px;height:120px}
.viewcube span{position:absolute;display:block;text-align:center}
.vc-ring{left:15px;top:12px;width:70px;height:70px;border-radius:50%;border:5px solid #3f3f3f}
.vc-top{left:35px;top:34px;width:30px;height:30px;background:#a4a4a4;color:#666;font-size:21px;line-height:28px}
.vc-n,.vc-s,.vc-w,.vc-e{width:14px;height:14px;color:#bbb;font-size:11.500px;line-height:14px;background:#000}
.vc-n{left:43px;top:10px}
.vc-s{left:43px;top:76px}
.vc-w{left:10px;top:43px}
.vc-e{left:75px;top:43px}
.vc-wcs{left:35px;top:101px;width:30px;height:10px;border-radius:3px;background:#6e6e74;color:#888;font:8px/10px "Liberation Sans",sans-serif}
.vscroll{width:15px;flex:none;background:#f0f0f0;display:flex;flex-direction:column;align-items:center;color:#444;font-size:9px;line-height:10px;padding-top:2px}
.vscroll i{display:block;width:11px;height:13px;background:#cfcfcf;margin-top:auto;margin-bottom:8px}
.vscroll span:last-child{margin-bottom:5px}
.layouttabs{height:14px;background:#efefef;display:flex;align-items:center;font-size:9.500px;color:#333;line-height:14px;flex:none;position:relative}
.navs{display:flex;width:52px;padding-left:2px;flex:none}
.navs b{display:block;width:11px;font-weight:400;font-size:9px;color:#555;text-align:center;letter-spacing:-1px}
.ltab{padding:0 9px 0 5px;height:14px;font-size:9.500px;clip-path:polygon(0 100%,5px 0,100% 0,calc(100% - 4px) 100%);flex:none;background:#e8e8e8}
.ltab.active{background:#111;color:#ddd;width:33px;padding:0 0 0 6px}
.hsc{position:absolute;left:580px;right:0;top:0;height:14px;display:flex;justify-content:space-between;border-left:2px solid #c8c8c8;padding:0 16px 0 6px;color:#444;background:#efefef}
.hsc b{font-weight:400}
.rightside{width:20px;flex:none;padding:6px 0 0 4px}
.rstrip{width:16px;height:256px;background:#ececec;border:1px solid #999;padding-top:2px;display:flex;flex-direction:column;align-items:center;gap:.35px}
.rstrip.two{height:88px;margin-top:7px;padding-top:1px}
.rsep{display:block;width:12px;height:1px;background:#aaa;margin:3px 0}

.command{height:36px;flex:none;display:flex}
.cmdhandle{width:18px;flex:none;background:#747474;color:#f2f2f2;position:relative;text-align:center;font-size:14px;padding-top:10px;line-height:16px}
.dots{display:block;position:absolute;left:2px;top:4px;width:14px;height:3px;border-top:1px dotted #aaa;border-bottom:1px dotted #aaa}
.cmdtext{flex:1;min-width:0;font-family:"DejaVu Sans Mono","Noto Sans CJK SC",monospace;font-size:12.200px;color:#222}
.cmdhist{height:18px;background:#c8c8c8;border-bottom:1px solid #999;line-height:17px;padding-left:2px}
.cmdline{height:18px;background:#fff;line-height:17px;display:flex;align-items:center;padding-left:3px;white-space:pre;border-bottom:1px solid #888}
.cmdline .tiny{margin:0 3px 0 3px;font-size:7px}
.cmdline svg{width:13px;height:12px;margin-left:2px}
.cmdmsg{flex:none;color:#333}
.cmdmsg b{font-weight:700;color:#111}

/* status */
.status{height:12px;flex:none;background:linear-gradient(#5a5a5a,#7e7e7e 40%,#a4a4a4);display:flex;align-items:flex-start;overflow:hidden;color:#ddd;font-size:10px;line-height:15px;padding-top:1px;position:relative;white-space:nowrap}
.scale{width:72px;padding-left:4px;color:#333;flex:none;background:#888;height:12px}
.coords{width:98px;color:#aaa;font-family:"Liberation Sans",sans-serif;flex:none}
.stoggles{display:flex;gap:1.800px;flex:none;width:222px;background:#aaa;height:14px}
.sright{position:absolute;left:616px;top:1px;right:15px;display:flex;gap:2px;align-items:flex-start;color:#222}
.st1{width:21px;background:#ccc;height:14px;text-align:center}
.st2{margin-left:14px;width:30px;background:#ccc;height:14px;padding-left:6px}
.gap4{display:block;width:4px;flex:none}
.gap8{display:block;width:8px;flex:none}
.chip{background:#ccc;height:14px;padding:0 2px;font-size:9.300px;color:#333;flex:none}
.chip.on{background:#bfe3f2;color:#124}

/* dialog */
.dialog{position:absolute;left:90px;top:96px;width:481px;height:376px;background:#f0f0f0;border:1px solid #bbb;display:flex;flex-direction:column}
.dtitle{height:21px;background:#fff;display:flex;align-items:center;padding-left:4px;color:#888;font-size:9.800px;flex:none}
.dtitle span{margin-left:2px}
.dctl{margin-left:auto;display:flex;gap:27px;padding-right:13px}
.dmenu{height:18px;background:#f8f8f8;display:flex;padding-left:3px;gap:9px;color:#444;font-size:9.600px;line-height:18px;border-bottom:1px solid #ccc;flex:none}
.dtools{height:21px;flex:none;display:flex;align-items:center}
.di{width:14px;height:14px;fill:none;stroke:#333;stroke-width:1.300;flex:none}
.di.rx{stroke:#d33;stroke-width:1.500}
.di.bx{stroke:#111;stroke-width:1.500}
.di.bl{stroke:#3f7fb5}
.di.bf{stroke:#3f7fb5;fill:#86b7dc}
.dsep{display:block;width:1px;height:14px;background:#aaa;margin:0 3px;flex:none}
.dsep.last{margin:0 3px 0 4px}
.dd{font-size:8px;width:9px;margin-left:1px;text-align:center;flex:none;color:#111}
.dbody{height:298px;flex:none;display:flex;background:#f0f0f0}
.dleft{width:132px;flex:none;display:flex;flex-direction:column;gap:4px;padding:4px 0 0 2px}
.tree{height:118px;background:#fff;border:1px solid #aaa;position:relative;padding-top:1px;overflow:hidden;font-size:9.800px;color:#333;line-height:11.700px}
.troot,.tk{height:11.700px;display:flex;align-items:center;white-space:nowrap}
.troot{font-family:"Liberation Mono",monospace;font-size:9.500px}
.tk{padding-left:24px;position:relative}
.tk::before{content:"";position:absolute;left:5px;top:5px;width:18px;border-top:1px dotted #888}
.box{display:block;width:8px;height:8px;border:1px solid #999;line-height:5px;font-size:8px;text-align:center;margin:0 2px 0 1px;flex:none}
.box.nob{border:0}
.ni{width:10px;height:10px;margin-right:2px;flex:none;fill:none;stroke:none}
.tscroll{position:absolute;right:0;top:0;bottom:0;width:13px;background:#f0f0f0;display:flex;flex-direction:column;align-items:center;font-size:9px;line-height:9px;color:#333;padding-top:5px}
.tscroll i{display:block;width:13px;height:81px;background:#cdcdcd;margin:5px 0 3px}
.list{height:172px;background:#fff;border:1px solid #aaa;padding:1px 0 0 1px;position:relative;margin-left:-2px;font-size:9.800px;color:#333}
.li{height:12.200px;display:flex;align-items:center;white-space:nowrap}
.li .ni{width:11px;height:11px;margin-right:0}
.lscroll{position:absolute;left:0;right:0;bottom:0;height:13px;background:#f0f0f0;display:flex;align-items:center;justify-content:space-between;padding:0 5px;font-size:10px;color:#333}
.lscroll i{display:block;width:52px;height:13px;background:#cdcdcd;margin-left:3px;margin-right:auto}
.previews{position:relative;margin-left:5px;width:342px;padding-top:6px;display:grid;grid-template-columns:162px 162px;grid-auto-rows:94px;gap:2.500px 3px;align-content:start;background:#f0f0f0}
.cell{display:block;background:#000;width:162px;height:94px;fill:none}
.w{stroke:#b8b8b8;stroke-width:1}
.y{stroke:#d4d49a;stroke-width:1}
.y2{stroke:#b4b488;stroke-width:2}
.x{stroke:#9a2a38;stroke-width:1}
.pscroll{position:absolute;left:330px;top:1px;bottom:2px;width:12px;background:#f0f0f0;display:flex;flex-direction:column;align-items:center;font-size:9px;line-height:9px;color:#333}
.pscroll i{display:block;width:11px;height:135px;background:#cdcdcd;margin:0 0 auto}
.dstatus{height:16px;flex:none;border-top:1px solid #ddd;display:flex;font-family:"Liberation Mono","Noto Sans CJK SC",monospace;font-size:9.800px;color:#333;line-height:15px;white-space:nowrap;background:#f0f0f0}
.dstatus span{display:block}
.pg{margin-left:23px}
.tot{margin-left:48px}

/* annotations */
.marks{position:absolute;left:0;top:0;fill:none;stroke:#dc1e24;stroke-width:3;pointer-events:none}
.marks rect{stroke:#d81c22;stroke-width:4}
.marks .head{fill:#e0181e;stroke:none}
.brand{position:absolute;left:765px;top:476px;width:180px;height:85px;background:#1f3058;display:flex;align-items:center;padding-left:14px;gap:12px;color:#c5cad2}
.brandlogo{flex:none}
.brandtext{display:flex;flex-direction:column;width:106px}
.brandtext strong{font-size:24.500px;line-height:28px;font-weight:500;white-space:nowrap;letter-spacing:2.500px;margin-left:-1px}
.brandtext small{font:9.500px/14px "Liberation Sans",sans-serif;letter-spacing:1.700px;white-space:nowrap;margin-top:2px}
```
